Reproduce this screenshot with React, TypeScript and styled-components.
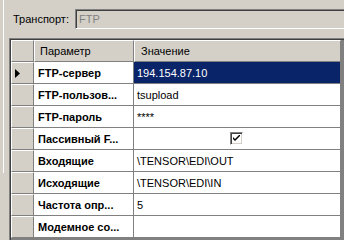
import React from "react";
import styled, { createGlobalStyle } from "styled-components";

const GlobalStyle = createGlobalStyle`
  html, body {
    margin: 0;
    padding: 0;
    background: #d4d0c8;
  }
  body {
    font-family: "Liberation Sans", Arial, sans-serif;
    font-size: 11px;
    color: #000;
  }
`;

const Page = styled.div`
  position: relative;
  width: 344px;
  height: 240px;
  overflow: hidden;
  background: #d4d0c8;
  &::before {
    // panel edge on the left
    content: "";
    position: absolute;
    left: 3px;
    top: 0;
    width: 1px;
    height: 173px;
    background: #fff;
  }
`;

const TransportRow = styled.div`
  display: flex;
  align-items: center;
  padding: 9px 0 0 13px;
  height: 20px;
`;

const Label = styled.span`
  flex: 0 0 62px;
`;

const TextBox = styled.div`
  flex: 0 0 300px;
  box-sizing: border-box;
  height: 20px;
  display: flex;
  align-items: center;
  padding-left: 3px;
  color: #808080;
  border: 1px solid;
  border-color: #808080 #fff #fff #808080;
  box-shadow: inset 1px 1px #404040;
`;

const GridFrame = styled.div`
  margin: 9px 0 0 9px;
  width: 400px;
  height: 220px;
  border-top: 1px solid #808080;
  border-left: 1px solid #808080;
  background: #808080;
`;

const GridInner = styled.div`
  height: 100%;
  display: grid;
  grid-template-columns: 23px 100px 207px;
  grid-auto-rows: 22px;
  align-content: start;
  border-top: 1px solid #404040;
  border-left: 1px solid #404040;
`;

const HeaderCell = styled.div<{ pad?: number }>`
  box-sizing: border-box;
  display: flex;
  align-items: center;
  padding-left: ${(p) => p.pad ?? 0}px;
  background: #d4d0c8;
  border-top: 1px solid #fff;
  border-left: 1px solid #fff;
  border-right: 1px solid #808080;
  border-bottom: 1px solid #808080;
  white-space: nowrap;
  overflow: hidden;
`;

const RowHeader = styled.div`
  box-sizing: border-box;
  display: flex;
  align-items: center;
  padding-left: 3px;
  background: #d4d0c8;
  border-top: 1px solid #fff;
  border-left: 1px solid #fff;
  border-right: 1px solid #808080;
  border-bottom: 1px solid #808080;
`;

const Cell = styled.div<{ selected?: boolean; bold?: boolean; center?: boolean }>`
  box-sizing: border-box;
  display: flex;
  align-items: center;
  justify-content: ${(p) => (p.center ? "center" : "flex-start")};
  padding-left: ${(p) => (p.bold ? 4 : 3)}px;
  background: ${(p) => (p.selected ? "#0a246a" : "#fff")};
  color: ${(p) => (p.selected ? "#fff" : "#000")};
  font-weight: ${(p) => (p.bold ? "bold" : "normal")};
  border-right: 1px solid #808080;
  border-bottom: 1px solid #808080;
  white-space: nowrap;
  overflow: hidden;
`;

const CheckBox = styled.div`
  box-sizing: border-box;
  width: 13px;
  height: 13px;
  margin-left: -4px;
  background: #fff;
  border: 1px solid;
  border-color: #808080 #fff #fff #808080;
  box-shadow: inset 1px 1px #404040, inset -1px -1px #d4d0c8;
  display: flex;
  align-items: center;
  justify-content: center;
`;

type Row = { name: string; value?: string; check?: boolean };

const rows: Row[] = [
  { name: "FTP-сервер", value: "194.154.87.10" },
  { name: "FTP-пользов...", value: "tsupload" },
  { name: "FTP-пароль", value: "****" },
  { name: "Пассивный F...", check: true },
  { name: "Входящие", value: "\\TENSOR\\EDI\\OUT" },
  { name: "Исходящие", value: "\\TENSOR\\EDI\\IN" },
  { name: "Частота опр...", value: "5" },
  { name: "Модемное со...", value: "" },
];

const Arrow = () => (
  <svg width="5" height="9" viewBox="0 0 5 9">
    <path d="M0 0 L5 4.5 L0 9 Z" fill="#000" />
  </svg>
);

const Check = () => (
  <svg width="7" height="7" viewBox="0 0 7 7">
    <path d="M0 2 L0 4 L2 6 L7 1 L7 -1 L2 4 Z" fill="#000" />
  </svg>
);

const App = () => (
  <Page>
    <GlobalStyle />
    <TransportRow>
      <Label>Транспорт:</Label>
      <TextBox>FTP</TextBox>
    </TransportRow>
    <GridFrame>
      <GridInner>
        <HeaderCell />
        <HeaderCell pad={5}>Параметр</HeaderCell>
        <HeaderCell pad={6}>Значение</HeaderCell>
        {rows.map((row, i) => (
          <React.Fragment key={row.name}>
            <RowHeader>{i === 0 && <Arrow />}</RowHeader>
            <Cell bold>{row.name}</Cell>
            {row.check ? (
              <Cell center>
                <CheckBox>
                  <Check />
                </CheckBox>
              </Cell>
            ) : (
              <Cell selected={i === 0}>{row.value}</Cell>
            )}
          </React.Fragment>
        ))}
      </GridInner>
    </GridFrame>
  </Page>
);

export default App;
